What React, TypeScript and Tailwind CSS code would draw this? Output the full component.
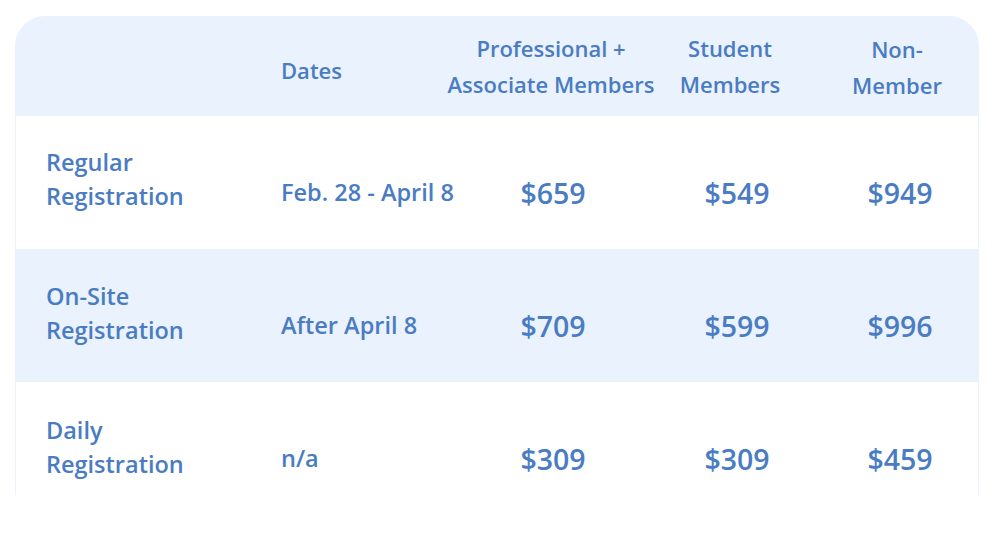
import React from "react";

type Row = {
  label: [string, string];
  dates: string;
  pro: string;
  student: string;
  non: string;
  tinted: boolean;
  shift: string;
};

const rows: Row[] = [
  { label: ["Regular", "Registration"], dates: "Feb. 28 - April 8", pro: "$659", student: "$549", non: "$949", tinted: false, shift: "-mt-[2px]" },
  { label: ["On-Site", "Registration"], dates: "After April 8", pro: "$709", student: "$599", non: "$996", tinted: true, shift: "mt-0" },
  { label: ["Daily", "Registration"], dates: "n/a", pro: "$309", student: "$309", non: "$459", tinted: false, shift: "mt-[3px]" },
];

const cols = "grid grid-cols-[250px_180px_210px_150px_174px]";

const App: React.FC = () => {
  return (
    <div
      className="w-[1000px] h-[545px] bg-white pt-4 pl-[15px] text-[#4a7cc3] font-semibold"
      style={{ fontFamily: '"Open Sans", "Liberation Sans", sans-serif' }}
    >
      <div className="w-[964px]">
        {/* header */}
        <div className={`${cols} h-[100px] bg-[#eaf2fe] rounded-t-[30px] items-center text-[22px] leading-[36px]`}>
          <div />
          <div className="pl-4 mt-[8px]">Dates</div>
          <div className="text-center pl-[2px]">
            Professional +<br />Associate Members
          </div>
          <div className="text-center">
            Student<br />Members
          </div>
          <div className="text-center pl-[10px] mt-[2px]">
            Non-<br />Member
          </div>
        </div>

        <div className="h-[379px] overflow-hidden">
          {rows.map((r) => (
            <div
              key={r.label[0]}
              className={`${cols} h-[133px] items-center ${
                r.tinted ? "bg-[#eaf2fe]" : "bg-white shadow-[inset_1px_0_0_#edf3fd,inset_-1px_0_0_#edf3fd]"
              }`}
            >
              <div className={`pl-[31px] text-[23.5px] leading-[34px] ${r.shift}`}>
                <div className="-mt-[6px]">
                  {r.label[0]}
                  <br />
                  {r.label[1]}
                </div>
              </div>
              <div className="pl-4 text-[23.5px] mt-[20px] whitespace-nowrap">{r.dates}</div>
              <div className="text-center pl-[6px] text-[28.5px] mt-[22px]">{r.pro}</div>
              <div className="text-center pl-[14px] text-[28.5px] mt-[22px]">{r.student}</div>
              <div className="text-center pl-[16px] text-[28.5px] mt-[22px]">{r.non}</div>
            </div>
          ))}
        </div>
      </div>
    </div>
  );
};

export default App;
